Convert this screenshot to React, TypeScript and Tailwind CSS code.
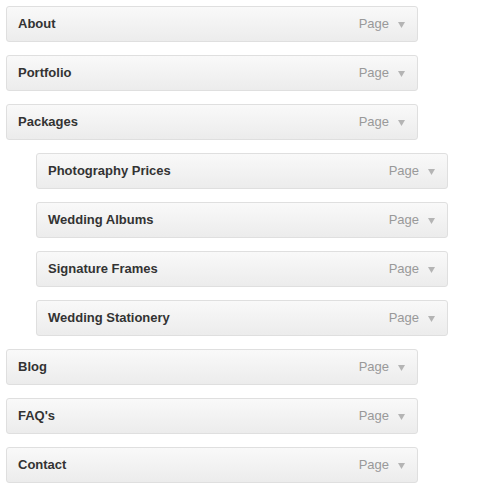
const items = [
  { title: 'About', depth: 0 },
  { title: 'Portfolio', depth: 0 },
  { title: 'Packages', depth: 0 },
  { title: 'Photography Prices', depth: 1 },
  { title: 'Wedding Albums', depth: 1 },
  { title: 'Signature Frames', depth: 1 },
  { title: 'Wedding Stationery', depth: 1 },
  { title: 'Blog', depth: 0 },
  { title: "FAQ's", depth: 0 },
  { title: 'Contact', depth: 0 },
]

function MenuItem({ title, depth }: { title: string; depth: number }) {
  return (
    <div
      className={`${depth ? 'ml-[36px]' : 'ml-[6px]'} w-[412px] h-[36px] flex items-center justify-between border border-[#dfdfdf] rounded-[3px] bg-gradient-to-b from-[#f9f9f9] to-[#ececec] pl-[11px] pr-[12px]`}
    >
      <span className="text-[13px] font-bold text-[#333]">{title}</span>
      <div className="flex items-center">
        <span className="text-[13px] text-[#999] -mt-[1px]">Page</span>
        <svg width="7" height="6" viewBox="0 0 7 6" className="ml-[9px] mt-[2px]">
          <path d="M0 0 L7 0 L3.5 6 Z" fill="#b4b4b4" />
        </svg>
      </div>
    </div>
  )
}

export default function App() {
  return (
    <div
      className="w-[490px] h-[498px] bg-white pt-[6px] flex flex-col gap-[13px]"
      style={{ fontFamily: '"Liberation Sans", Arial, sans-serif' }}
    >
      {items.map((it) => (
        <MenuItem key={it.title} title={it.title} depth={it.depth} />
      ))}
    </div>
  )
}
